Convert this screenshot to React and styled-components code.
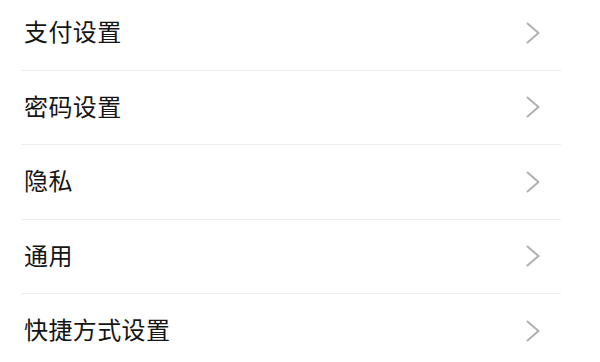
import React from "react";
import styled, { createGlobalStyle } from "styled-components";

const GlobalStyle = createGlobalStyle`
    html, body {
        margin: 0;
        padding: 0;
        background: #ffffff;
        overflow: hidden;
    }
`

const Page = styled.div`
    width: 600px;
    height: 362px;
    overflow: hidden;
    background: #ffffff;
    font-family: "Noto Sans CJK SC", "Noto Sans", sans-serif;
`

const List = styled.ul`
    list-style: none;
    margin: -4px 0 0 0;
    padding: 0 39px 0 22px;
`

const Row = styled.li`
    display: flex;
    align-items: center;
    justify-content: space-between;
    height: 73.5px;
    border-bottom: ${props => props.last ? "none" : "1px solid #ededed"};
    cursor: pointer;
`

const Label = styled.span`
    padding-left: 2px;
    margin-bottom: 3px;
    font-size: 24px;
    line-height: 32px;
    color: #151515;
    letter-spacing: 0.4px;
`

const Arrow = styled.svg`
    width: 16px;
    height: 22px;
    margin-right: 20px;
`

const Chevron = () => (
    <Arrow viewBox="0 0 16 22">
        <path d="M2.5 1.5 L13.5 11 L2.5 20.5" fill="none" stroke="#b0b0b0" strokeWidth="2" strokeLinecap="round" strokeLinejoin="round" />
    </Arrow>
)

const items = ["支付设置", "密码设置", "隐私", "通用", "快捷方式设置"];

const App = () => {
    return (
        <Page>
            <GlobalStyle />
            <List>
                {items.map((item, i) => (
                    <Row key={item} last={i === items.length - 1}>
                        <Label>{item}</Label>
                        <Chevron />
                    </Row>
                ))}
            </List>
        </Page>
    );
}

export default App;
